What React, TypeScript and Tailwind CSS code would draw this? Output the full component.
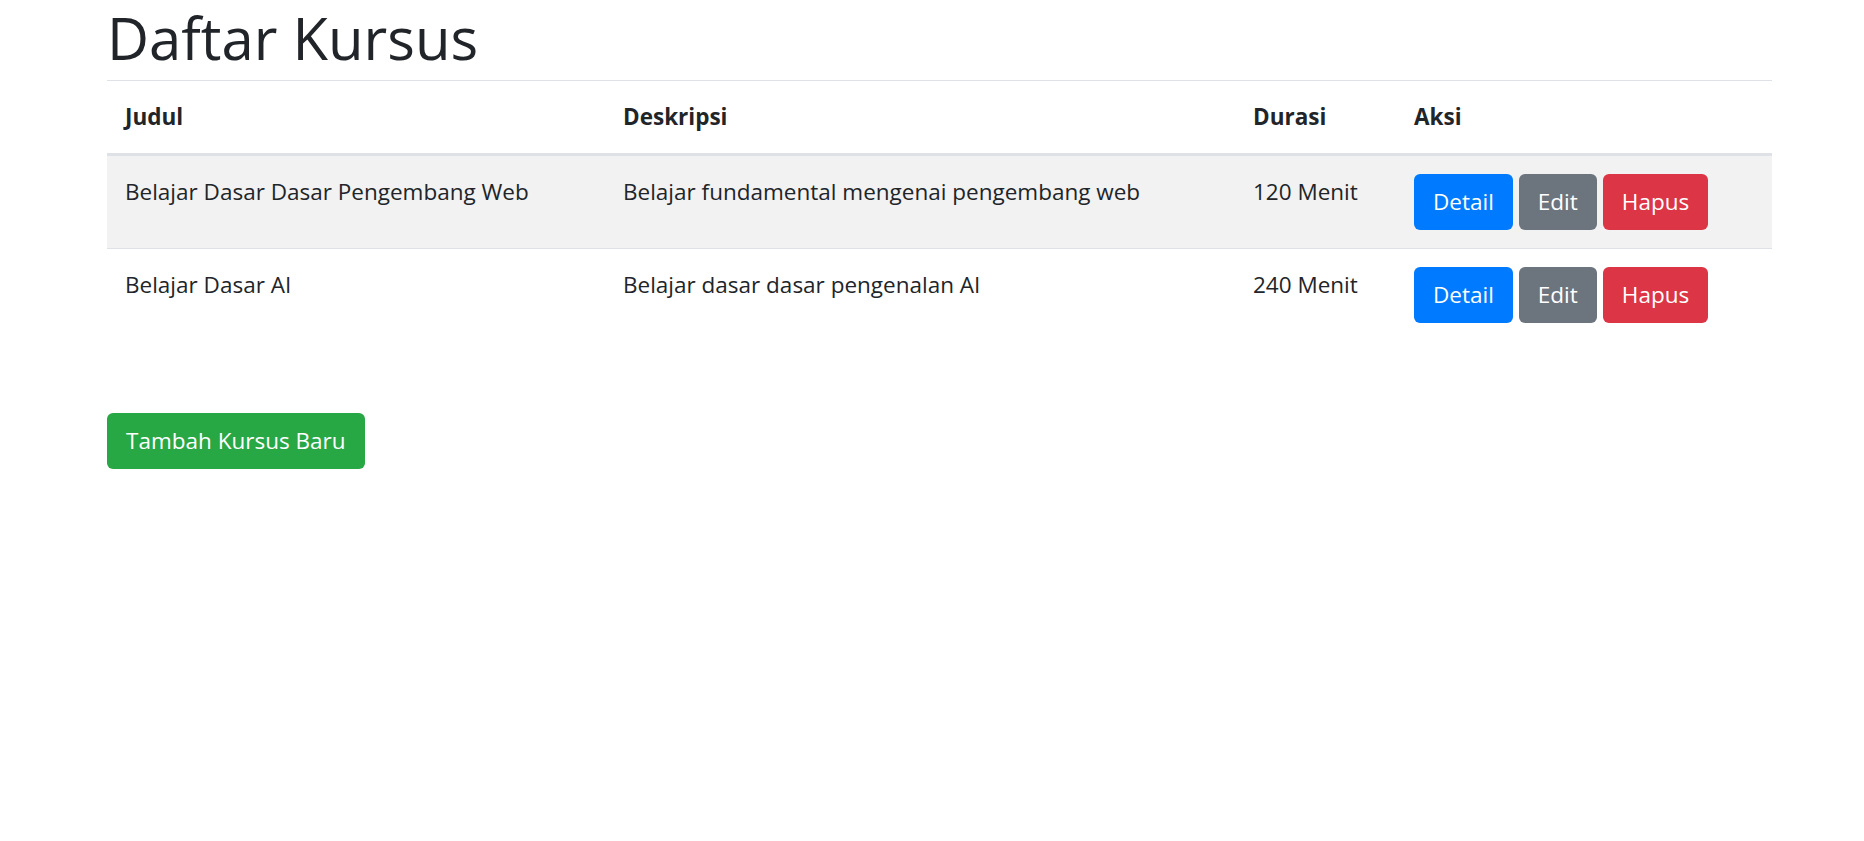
import React from "react";

interface Kursus {
  judul: string;
  deskripsi: string;
  durasi: string;
}

const kursus: Kursus[] = [
  {
    judul: "Belajar Dasar Dasar Pengembang Web",
    deskripsi: "Belajar fundamental mengenai pengembang web",
    durasi: "120 Menit",
  },
  {
    judul: "Belajar Dasar AI",
    deskripsi: "Belajar dasar dasar pengenalan AI",
    durasi: "240 Menit",
  },
];

export default function App() {
  return (
    <div className="min-h-screen bg-white pl-[107px] text-[#212529] font-['Open_Sans',sans-serif]">
      <div className="w-[1665px]">
        <h1 className="h-[80px] text-[58px] font-medium leading-[72px] pt-[2px]">
          Daftar Kursus
        </h1>

        <table className="w-full table-fixed border-collapse text-[22.5px] leading-[36px]">
          <colgroup>
            <col className="w-[498px]" />
            <col className="w-[630px]" />
            <col className="w-[161px]" />
            <col />
          </colgroup>
          <thead>
            <tr>
              <th className="border-t border-b-[3px] border-[#dee2e6] p-[18px] text-left align-bottom font-bold">
                Judul
              </th>
              <th className="border-t border-b-[3px] border-[#dee2e6] p-[18px] text-left align-bottom font-bold">
                Deskripsi
              </th>
              <th className="border-t border-b-[3px] border-[#dee2e6] p-[18px] text-left align-bottom font-bold">
                Durasi
              </th>
              <th className="border-t border-b-[3px] border-[#dee2e6] p-[18px] text-left align-bottom font-bold">
                Aksi
              </th>
            </tr>
          </thead>
          <tbody>
            {kursus.map((k, i) => (
              <tr
                key={k.judul}
                className={i % 2 === 0 ? "bg-[#f2f2f2]" : "bg-white"}
              >
                <td className="border-t border-[#dee2e6] p-[18px] align-top">
                  {k.judul}
                </td>
                <td className="border-t border-[#dee2e6] p-[18px] align-top">
                  {k.deskripsi}
                </td>
                <td className="border-t border-[#dee2e6] p-[18px] align-top">
                  {k.durasi}
                </td>
                <td className="border-t border-[#dee2e6] p-[18px] align-top">
                  <div className="flex gap-[6px]">
                    <button className="h-[56px] rounded-[6px] bg-[#007bff] px-[19px] text-white">
                      Detail
                    </button>
                    <button className="h-[56px] rounded-[6px] bg-[#6c757d] px-[19px] text-white">
                      Edit
                    </button>
                    <button className="h-[56px] rounded-[6px] bg-[#dc3545] px-[19px] text-white">
                      Hapus
                    </button>
                  </div>
                </td>
              </tr>
            ))}
          </tbody>
        </table>

        <button className="mt-[72px] h-[56px] rounded-[6px] bg-[#28a745] px-[19px] text-[22.5px] leading-[36px] text-white">
          Tambah Kursus Baru
        </button>
      </div>
    </div>
  );
}
